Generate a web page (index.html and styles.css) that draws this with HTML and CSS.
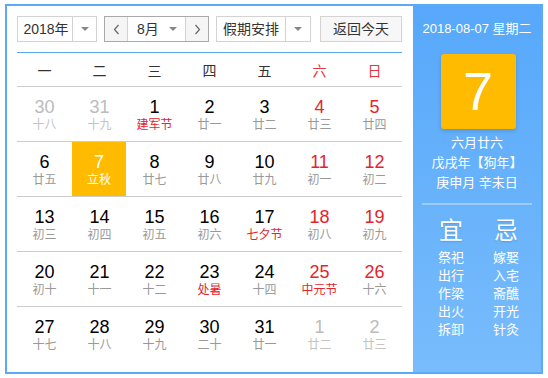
FILE: index.html
```html
<!DOCTYPE html>
<html lang="zh-CN">
<head>
<meta charset="utf-8">
<link rel="stylesheet" href="styles.css">
</head>
<body>
<div class="cal">
  <div class="main">
    <div class="toolbar">
      <div class="select year"><span class="val">2018年</span><span class="arrow"></span></div>
      <div class="month-group">
        <span class="nav"><svg width="7" height="11" viewBox="0 0 7 11"><polyline points="5.5,1 1.5,5.5 5.5,10" fill="none" stroke="#666" stroke-width="1.2"/></svg></span>
        <div class="month"><span class="val">8月</span><span class="arrow"></span></div>
        <span class="nav"><svg width="7" height="11" viewBox="0 0 7 11"><polyline points="1.5,1 5.5,5.5 1.5,10" fill="none" stroke="#666" stroke-width="1.2"/></svg></span>
      </div>
      <div class="select holiday"><span class="val">假期安排</span><span class="arrow"></span></div>
      <div class="today-btn">返回今天</div>
    </div>
    <div class="week">
      <span>一</span><span>二</span><span>三</span><span>四</span><span>五</span><span class="we">六</span><span class="we">日</span>
    </div>
    <div class="grid">
      <div class="row">
        <div class="day other"><b>30</b><i>十八</i></div>
        <div class="day other"><b>31</b><i>十九</i></div>
        <div class="day"><b>1</b><i class="fest">建军节</i></div>
        <div class="day"><b>2</b><i>廿一</i></div>
        <div class="day"><b>3</b><i>廿二</i></div>
        <div class="day we"><b>4</b><i>廿三</i></div>
        <div class="day we"><b>5</b><i>廿四</i></div>
      </div>
      <div class="row">
        <div class="day"><b>6</b><i>廿五</i></div>
        <div class="day today"><b>7</b><i>立秋</i></div>
        <div class="day"><b>8</b><i>廿七</i></div>
        <div class="day"><b>9</b><i>廿八</i></div>
        <div class="day"><b>10</b><i>廿九</i></div>
        <div class="day we"><b>11</b><i>初一</i></div>
        <div class="day we"><b>12</b><i>初二</i></div>
      </div>
      <div class="row">
        <div class="day"><b>13</b><i>初三</i></div>
        <div class="day"><b>14</b><i>初四</i></div>
        <div class="day"><b>15</b><i>初五</i></div>
        <div class="day"><b>16</b><i>初六</i></div>
        <div class="day"><b>17</b><i class="fest">七夕节</i></div>
        <div class="day we"><b>18</b><i>初八</i></div>
        <div class="day we"><b>19</b><i>初九</i></div>
      </div>
      <div class="row">
        <div class="day"><b>20</b><i>初十</i></div>
        <div class="day"><b>21</b><i>十一</i></div>
        <div class="day"><b>22</b><i>十二</i></div>
        <div class="day"><b>23</b><i class="fest">处暑</i></div>
        <div class="day"><b>24</b><i>十四</i></div>
        <div class="day we"><b>25</b><i class="fest">中元节</i></div>
        <div class="day we"><b>26</b><i>十六</i></div>
      </div>
      <div class="row">
        <div class="day"><b>27</b><i>十七</i></div>
        <div class="day"><b>28</b><i>十八</i></div>
        <div class="day"><b>29</b><i>十九</i></div>
        <div class="day"><b>30</b><i>二十</i></div>
        <div class="day"><b>31</b><i>廿一</i></div>
        <div class="day other"><b>1</b><i>廿二</i></div>
        <div class="day other"><b>2</b><i>廿三</i></div>
      </div>
    </div>
  </div>
  <div class="panel">
    <div class="date">2018-08-07 星期二</div>
    <div class="bigday">7</div>
    <div class="lunar">
      <div>六月廿六</div>
      <div>戊戌年【狗年】</div>
      <div>庚申月 辛未日</div>
    </div>
    <div class="sep"></div>
    <div class="yiji">
      <div class="col">
        <div class="title">宜</div>
        <div>祭祀</div><div>出行</div><div>作梁</div><div>出火</div><div>拆卸</div>
      </div>
      <div class="col">
        <div class="title">忌</div>
        <div>嫁娶</div><div>入宅</div><div>斋醮</div><div>开光</div><div>针灸</div>
      </div>
    </div>
  </div>
</div>
</body>
</html>
```

FILE: styles.css
```css
* { box-sizing: border-box; }
html, body { margin: 0; padding: 0; background: #fff; }
body {
  font-family: "Liberation Sans", "Noto Sans CJK SC", Arial, sans-serif;
  color: #333;
}
.cal {
  margin: 4px 0 0 5px;
  width: 538px;
  height: 370px;
  border: 2px solid #5ca9f8;
  display: flex;
}
.main {
  width: 406px;
  padding: 10px 11px 0 10px;
  display: flex;
  flex-direction: column;
}
.toolbar {
  display: flex;
  height: 26px;
  font-size: 14px;
  color: #333;
}
.select {
  display: flex;
  border: 1px solid #d3d3d3;
  background: #fff;
  height: 26px;
}
.select .val {
  flex: 1;
  display: flex;
  align-items: center;
  justify-content: center;
  line-height: 24px;
}
.select .arrow {
  width: 24px;
  border-left: 1px solid #d3d3d3;
  position: relative;
}
.arrow::after {
  content: "";
  position: absolute;
  left: 50%;
  top: 50%;
  margin: -2px 0 0 -4px;
  border-left: 4px solid transparent;
  border-right: 4px solid transparent;
  border-top: 4px solid #888;
}
.year { width: 80px; }
.year .val { padding-left: 2px; }
.month-group {
  margin-left: 7px;
  width: 105px;
  height: 26px;
  display: flex;
  border: 1px solid #a9a9a9;
}
.nav {
  width: 22px;
  background: #f5f5f5;
  display: flex;
  align-items: center;
  justify-content: center;
}
.month {
  flex: 1;
  display: flex;
  border-left: 1px solid #d3d3d3;
  border-right: 1px solid #d3d3d3;
  background: #fff;
}
.month .val {
  flex: 1;
  line-height: 24px;
  padding-left: 9px;
}
.month .arrow {
  width: 24px;
  position: relative;
}
.holiday { margin-left: 7px; width: 95px; }
.holiday .arrow { width: 25px; }
.today-btn {
  margin-left: 9px;
  width: 82px;
  height: 26px;
  border: 1px solid #d3d3d3;
  background: #f7f7f7;
  text-align: center;
  line-height: 24px;
}
.week {
  margin-top: 10px;
  border-top: 1px solid #5ca9f8;
  height: 34px;
  display: grid;
  grid-template-columns: repeat(7, 55px);
  align-items: center;
  font-size: 14px;
  color: #333;
}
.week span { text-align: center; }
.week .we { color: #e0383e; }
.row {
  border-top: 1px solid #ccc;
  height: 55px;
  display: grid;
  grid-template-columns: repeat(7, 55px);
}
.day {
  display: flex;
  flex-direction: column;
  align-items: center;
  padding-top: 10px;
}
.day b {
  font-weight: normal;
  font-size: 18px;
  line-height: 20px;
  color: #000;
}
.day i {
  font-style: normal;
  font-size: 12px;
  line-height: 16px;
  color: #999;
}
.day.we b { color: #e5232d; }
.day i.fest { color: #e5232d; }
.day.other b { color: #bbb; }
.day.other i { color: #c4c4c4; }
.day.today {
  background: #ffbb00;
  margin-right: 1px;
}
.day.today b, .day.today i { color: #fff; }
.panel {
  width: 128px;
  background: linear-gradient(#57a8fb, #78bcfc);
  color: #fff;
  display: flex;
  flex-direction: column;
  align-items: center;
  padding-top: 14px;
  font-size: 13px;
}
.date { line-height: 18px; font-size: 13px; }
.bigday {
  margin-top: 16px;
  width: 75px;
  height: 75px;
  margin-left: 2px;
  background: #ffbb00;
  border-radius: 3px;
  box-shadow: 0 2px 4px rgba(0, 0, 0, 0.15);
  font-size: 54px;
  line-height: 75px;
  text-align: center;
  font-family: "Liberation Sans", Arial, sans-serif;
}
.lunar {
  margin-top: 4px;
  text-align: center;
  line-height: 20px;
  font-size: 13px;
}
.sep {
  margin-top: 10px;
  width: 110px;
  height: 2px;
  background: rgba(255, 255, 255, 0.35);
}
.yiji {
  display: flex;
  margin-top: 11px;
  padding-left: 3px;
}
.col {
  width: 55px;
  text-align: center;
  font-size: 13px;
  line-height: 18px;
}
.col .title {
  font-size: 24px;
  line-height: 30px;
  margin-bottom: 3px;
  text-shadow: 0 1px 2px rgba(0, 0, 0, 0.15);
}
```
